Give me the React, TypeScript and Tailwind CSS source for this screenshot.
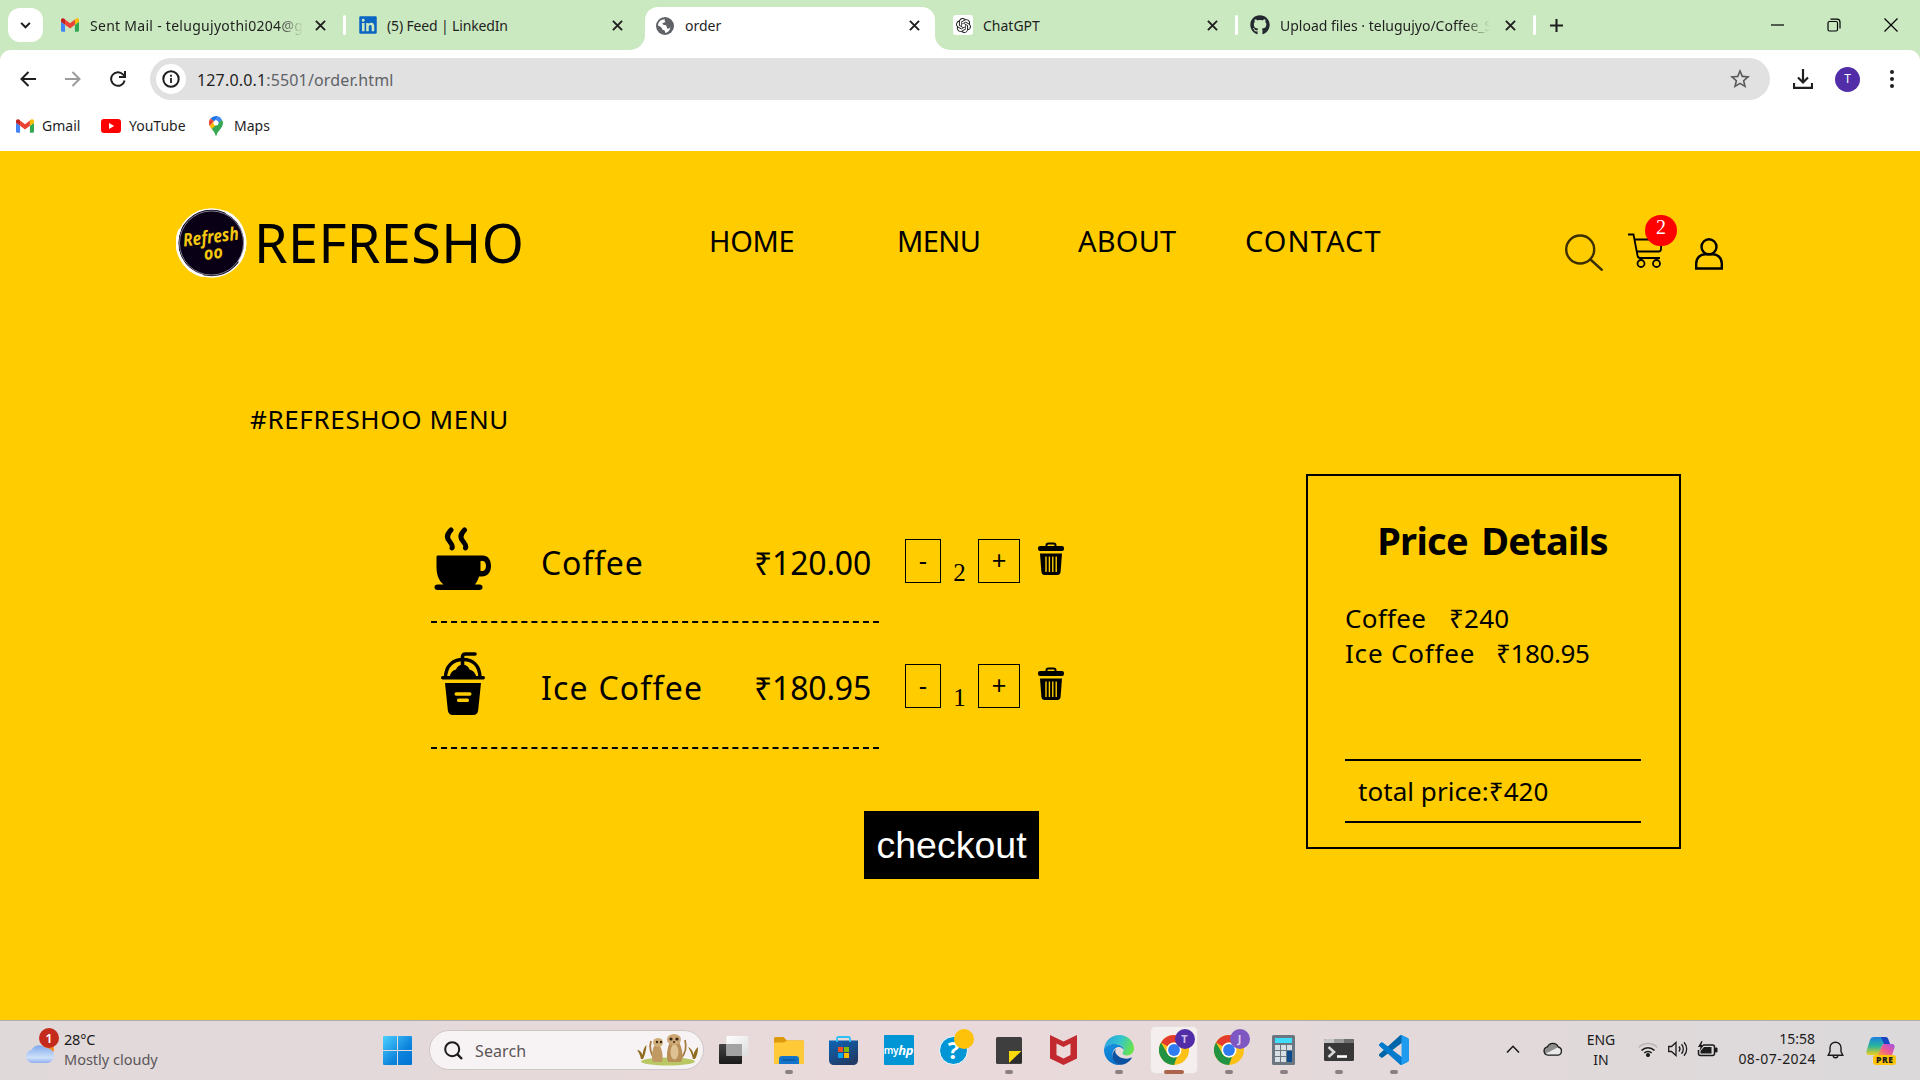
import React from "react";
import { FaGithub, FaLinkedin } from "react-icons/fa";
import { SiOpenai } from "react-icons/si";
import { MdStarOutline } from "react-icons/md";

/* ---------- small brand marks ---------- */

function Gmail() {
  return (
    <svg viewBox="52 42 88 66" className="h-[14px] w-[18px]">
      <path fill="#4285f4" d="M58 108h14V74L52 59v43c0 3.3 2.7 6 6 6" />
      <path fill="#34a853" d="M120 108h14c3.3 0 6-2.7 6-6V59l-20 15" />
      <path fill="#fbbc04" d="M120 48v26l20-15v-8c0-7.4-8.5-11.6-14.4-7.2" />
      <path fill="#ea4335" d="M72 74V48l24 18 24-18v26L96 92" />
      <path fill="#c5221f" d="M52 51v8l20 15V48l-5.6-4.2C60.500 39.400 52 43.600 52 51" />
    </svg>
  );
}

function MapsPin() {
  return (
    <svg viewBox="0 0 14 20" className="h-5 w-[14px]">
      <path d="M7 0a7 7 0 0 0-5.400 2.500L5 5.400 9 .3A7 7 0 0 0 7 0z" fill="#1a73e8" />
      <path d="M1.600 2.500A7 7 0 0 0 .7 10L5 5.300z" fill="#ea4335" />
      <path d="M9 .3 5 5.300a2.600 2.600 0 0 1 4 3.300l3.900-4.900A7 7 0 0 0 9 .3z" fill="#4285f4" />
      <path d="M.7 10c.4 1 1.200 2 2 3L9 8.600a2.600 2.600 0 0 1-4-3.300z" fill="#fbbc04" />
      <path d="M12.900 3.700 2.700 13C4.800 15.600 6 17 6.500 19.500c.1.600.9.600 1 0C8.300 15 14 12 14 7c0-1.200-.4-2.300-1.100-3.300z" fill="#34a853" />
      <circle cx="7" cy="7" r="2.500" fill="#fff" />
    </svg>
  );
}

function Globe() {
  return (
    <svg viewBox="0 0 18 18" className="size-[18px]">
      <circle cx="9" cy="9" r="9" fill="#5f6368" />
      <path d="M9.500 2.200c-1 .2-1.200 1.200-.6 1.900.8.900-.1 1.700-1.300 1.600-1-.1-1.400.8-.9 1.600.7 1 2.700.3 3.500 1.100 1 1 .1 2.300 1.300 3.200.9.600 2-.2 2.900-1.500A7 7 0 0 1 9.800 16c-.9-.5-.6-2-1.500-2.700-.9-.6-2.300-.4-2.400-1.800C5.800 10 4.500 9.600 2 8.400 2.100 5 5 2 9.500 2.200z" fill="#fff" />
    </svg>
  );
}

function CloseX({ className = "" }: { className?: string }) {
  return (
    <svg viewBox="0 0 12 12" className={"size-[11px] shrink-0 " + className} stroke="#1f1f1f" strokeWidth="2.100">
      <path d="M1 1l10 10M11 1 1 11" />
    </svg>
  );
}

function Separator({ className = "" }: { className?: string }) {
  return <div className={"h-5 w-[3px] shrink-0 rounded bg-white " + className} />;
}

/* ---------- browser chrome ---------- */

function TabStrip() {
  return (
    <div className="flex h-[50px] bg-[#cbe9c0] text-[14px] leading-[51px] text-[#1f1f1f]">
      <div className="ml-2 mt-2 flex h-[34px] w-[35px] items-center justify-center rounded-[12px] bg-white">
        <svg viewBox="0 0 12 8" className="h-[7px] w-[11px]" fill="none" stroke="#1f1f1f" strokeWidth="2.300">
          <path d="M1 1l5 5 5-5" />
        </svg>
      </div>

      <div className="ml-[18px] flex w-[282px] items-center">
        <Gmail />
        <span className="ml-[11px] w-[213px] overflow-hidden whitespace-nowrap tracking-[0.28px] [mask-image:linear-gradient(90deg,#000_88%,transparent)]">
          Sent Mail - telugujyothi0204@g
        </span>
        <CloseX className="ml-[12px]" />
      </div>
      <Separator className="mt-[15px]" />
      <div className="ml-[12px] flex w-[272px] items-center">
        <span className="flex size-5 items-center justify-center">
          <FaLinkedin className="size-[20px] text-[#0a66c2]" />
        </span>
        <span className="ml-[9px] w-[225px] whitespace-nowrap tracking-[-0.15px]">(5) Feed | LinkedIn</span>
        <CloseX />
      </div>

      <svg viewBox="0 0 15 15" className="mt-[35px] h-[15px] w-[15px] shrink-0">
        <path d="M0 15A15 15 0 0 0 15 0V15z" fill="#fff" />
      </svg>
      <div className="mt-[7px] flex h-[43px] w-[290px] items-center rounded-t-[13px] bg-white pb-[6px]">
        <span className="ml-[11px]">
          <Globe />
        </span>
        <span className="ml-[11px] w-[224px]">order</span>
        <CloseX />
      </div>
      <svg viewBox="0 0 15 15" className="mt-[35px] h-[15px] w-[15px] shrink-0">
        <path d="M15 15A15 15 0 0 1 0 0V15z" fill="#fff" />
      </svg>

      <div className="ml-[3px] flex w-[282px] items-center">
        <span className="flex size-5 items-center justify-center rounded-[3px] bg-white">
          <SiOpenai className="size-[15px]" />
        </span>
        <span className="ml-[10px] w-[224px]">ChatGPT</span>
        <CloseX />
      </div>
      <Separator className="mt-[15px]" />
      <div className="ml-[12px] flex w-[283px] items-center">
        <FaGithub className="size-5 text-[#24292f]" />
        <span className="ml-[10px] w-[210px] overflow-hidden whitespace-nowrap [mask-image:linear-gradient(90deg,#000_88%,transparent)]">
          Upload files · telugujyo/Coffee_S
        </span>
        <CloseX className="ml-[15px]" />
      </div>
      <Separator className="mt-[15px]" />
      <svg viewBox="0 0 13 13" className="ml-[14px] mt-[19px] size-[13px] shrink-0" stroke="#1f1f1f" strokeWidth="2.100">
        <path d="M6.500 0v13M0 6.500h13" />
      </svg>

      <div className="ml-auto mr-[22px] flex items-center">
        <svg viewBox="0 0 14 14" className="size-[14px]" stroke="#000" strokeWidth="1.200">
          <path d="M0 7h13" />
        </svg>
        <svg viewBox="0 0 14 14" className="ml-[42px] size-[14px]" fill="none" stroke="#000" strokeWidth="1.200">
          <rect x="1" y="3.500" width="9.500" height="9.500" rx="1.500" />
          <path d="M3.500 1.200h6.500a3 3 0 0 1 3 3v6.300" />
        </svg>
        <svg viewBox="0 0 14 14" className="ml-[43px] size-[14px]" stroke="#000" strokeWidth="1.200">
          <path d="M.5.5l13 13M13.500.5l-13 13" />
        </svg>
      </div>
    </div>
  );
}

function Toolbar() {
  return (
    <div className="bg-[#cbe9c0]">
      <div className="flex h-[58px] items-center rounded-t-[11px] bg-white">
        <svg viewBox="0 0 16 16" className="ml-5 size-4" fill="none" stroke="#1f1f1f" strokeWidth="2">
          <path d="M16 8H1.500M8.500 1l-7 7 7 7" />
        </svg>
        <svg viewBox="0 0 16 16" className="ml-[29px] size-4" fill="none" stroke="#9b9b9b" strokeWidth="2">
          <path d="M0 8h14.500M7.500 1l7 7-7 7" />
        </svg>
        <svg viewBox="0 0 16 16" className="ml-[29px] size-4" fill="none" stroke="#1f1f1f" strokeWidth="2">
          <path d="M14.600 9.500A6.800 6.800 0 1 1 13 3.400L15 5.400" />
          <path d="M15 0v6H9" />
        </svg>
        <div className="ml-[24px] flex h-[42px] w-[1620px] items-center rounded-full bg-[#e1e1e1]">
          <span className="ml-[6px] flex size-[30px] items-center justify-center rounded-full bg-white">
            <svg viewBox="0 0 18 18" className="size-[18px]" fill="none" stroke="#1f1f1f" strokeWidth="2">
              <circle cx="9" cy="9" r="7.700" />
              <path d="M9 8v5M9 4.800v2" strokeWidth="1.800" />
            </svg>
          </span>
          <span className="ml-[11px] pt-px text-[16px] tracking-[0.16px] text-[#5f6368]">
            <span className="text-[#1f1f1f]">127.0.0.1</span>:5501/order.html
          </span>
          <MdStarOutline className="ml-auto mr-[18px] size-[24px] text-[#5a5a5a]" />
        </div>
        <svg viewBox="0 0 20 20" className="ml-[23px] size-5" fill="none" stroke="#1f1f1f" strokeWidth="2.200">
          <path d="M10 0v13M5 8.500l5 5 5-5M1 14v4.800h18V14" />
        </svg>
        <span className="ml-[22px] flex size-[25px] items-center justify-center rounded-full bg-[#512da8] text-[12px] text-white">T</span>
        <svg viewBox="0 0 4 18" className="ml-[30px] h-[18px] w-1" fill="#1f1f1f">
          <circle cx="2" cy="2" r="2" />
          <circle cx="2" cy="9" r="2" />
          <circle cx="2" cy="16" r="2" />
        </svg>
      </div>
      <div className="flex h-[43px] items-center bg-white pb-[8px] text-[14px] text-[#1f1f1f]">
        <span className="ml-4 flex w-[85px] items-center gap-2">
          <Gmail />
          Gmail
        </span>
        <span className="flex w-[108px] items-center gap-2">
          <svg viewBox="0 0 20 14" className="h-[14px] w-5">
            <rect width="20" height="14" rx="3" fill="#f00" />
            <path d="M8 4l5.200 3L8 10z" fill="#fff" />
          </svg>
          YouTube
        </span>
        <span className="flex items-center gap-[11px]">
          <MapsPin />
          Maps
        </span>
      </div>
    </div>
  );
}

/* ---------- page ---------- */

function Logo() {
  return (
    <svg viewBox="0 0 71 72" className="-mt-px h-[72px] w-[71px]">
      <circle cx="35.500" cy="36" r="34" fill="#0a0016" stroke="#fff" strokeWidth="1.600" />
      <path d="M4 22A34 34 0 0 0 27 69M50 5a34 34 0 0 1 13 50" fill="none" stroke="#fff" strokeWidth="2.600" />
      <circle cx="35.500" cy="36" r="32" fill="none" stroke="#b9b4c4" strokeWidth=".7" />
      <g transform="rotate(-7 35 32)" fill="#f4c80f" fontFamily="'Noto Sans', sans-serif" fontWeight="700" fontStyle="italic">
        <text x="7" y="36" fontSize="18" textLength="56" lengthAdjust="spacingAndGlyphs">Refresh</text>
        <text x="26" y="52" fontSize="18" textLength="19" lengthAdjust="spacingAndGlyphs">oo</text>
      </g>
    </svg>
  );
}

function PageHeader() {
  return (
    <header className="mt-[56px] flex h-[72px] items-center pl-[176px] leading-[72px] text-black">
      <Logo />
      <span className="ml-[7px] w-[456px] pb-[3px] text-[54px] tracking-[0.4px]">REFRESHO</span>
      <nav className="flex h-[72px] text-[29px] leading-[68px]">
        <a className="-ml-px w-[188px] tracking-[-0.3px]">HOME</a>
        <a className="w-[181px] tracking-[-0.6px]">MENU</a>
        <a className="w-[167px] tracking-[0.2px]">ABOUT</a>
        <a className="w-[320px] tracking-[1.1px]">CONTACT</a>
      </nav>
      <svg viewBox="0 0 38 37" className="mt-[18px] h-[37px] w-[38px]" fill="none" stroke="#3c2f00" strokeWidth="2.400">
        <circle cx="15.200" cy="15.500" r="14" />
        <path d="M25.500 25.500 37.500 36.500" />
      </svg>
      <div className="relative ml-[25px] mt-[13px] h-[36px] w-[35px]">
        <svg viewBox="0 0 35 36" className="h-[36px] w-[35px]" fill="none" stroke="#000" strokeWidth="1.800">
          <path d="M0 2.500h5.500l4 21c.4 1.800 1 2.500 2.500 2.500h20M7 7.500h26.500L33 17c0 1.800-.8 2.500-2.500 2.500H9" />
          <circle cx="13" cy="31.500" r="3.500" />
          <circle cx="28.500" cy="31.500" r="3.500" />
        </svg>
        <span className="absolute -top-[17px] left-[17px] flex h-[31px] w-8 items-center justify-center rounded-full bg-[#f00] pb-[7px] font-['Liberation_Serif',serif] text-[20px] leading-none text-white">
          2
        </span>
      </div>
      <svg viewBox="0 0 28 32" className="ml-[32px] mt-[22px] h-8 w-7" fill="none" stroke="#000" strokeWidth="2.400">
        <circle cx="14" cy="8.800" r="7.500" />
        <path d="M1.200 30.500v-5c0-5.500 4-9.300 9-9.300h7.600c5 0 9 3.800 9 9.300v5z" />
      </svg>
    </header>
  );
}

function CoffeeIcon() {
  return (
    <svg viewBox="0 0 58 63" className="h-[63px] w-[58px]">
      <g fill="none" stroke="#000" strokeWidth="5" strokeLinecap="round">
        <path d="M17 3c-5 5-4 9-1 12 2 2.500 3 4 2 6" />
        <path d="M30.500 3c-5 5-4 9-1 12 2 2.500 3 4 2 6" />
      </g>
      <path d="M4 28.500h45c4.500 0 8 4 8 10.500s-4 10.500-9 10.500h-3c-1 3-2 5.500-4 8h4.500c2 0 3 1 3 2.700s-1 2.800-3 2.800H3.500C1.500 63 .5 62 .5 60.200s1-2.700 3-2.700h6C5 54 2.500 48 2.500 40V30c0-1 .5-1.500 1.500-1.500z" fill="#000" />
      <path d="M46.500 34h2c2.300 0 3.500 2 3.500 5s-1.500 5-4 5h-1.500z" fill="#ffcc00" />
    </svg>
  );
}

function IceCoffeeIcon() {
  return (
    <svg viewBox="0 0 44 63" className="ml-[7px] h-[63px] w-[44px]">
      <path d="M21.500 14V5c0-2 1-3 3-3H34" fill="none" stroke="#000" strokeWidth="3.600" strokeLinecap="round" />
      <path d="M4.500 25C5 13.500 12 7.500 22 7.500S38.500 13.500 39 25" fill="none" stroke="#000" strokeWidth="3.400" />
      <path d="M8.500 26c.5-5 3-7.500 6.500-8.500 1-3 3.500-4.500 6.800-5 3.300.5 5.800 2 6.700 5 3.500 1 6.500 3.500 7 8.500z" fill="#000" />
      <rect x="0" y="24" width="44" height="3.600" rx="1.800" fill="#000" />
      <path d="M4 31h36l-2.800 27c-.4 3.500-2 5-5 5H11.800c-3 0-4.600-1.500-5-5z" fill="#000" />
      <rect x="13.500" y="40.300" width="17" height="3.400" rx="1.600" fill="#ffcc00" />
      <rect x="16" y="46.600" width="12" height="3.400" rx="1.600" fill="#ffcc00" />
    </svg>
  );
}

function Trash() {
  return (
    <svg viewBox="0 0 26 33" className="h-[33px] w-[26px]">
      <path d="M8.500 5V3.200c0-1 .7-1.700 1.700-1.700h5.600c1 0 1.700.7 1.700 1.700V5" fill="none" stroke="#000" strokeWidth="2" />
      <rect y="4" width="26" height="5" rx="2" fill="#000" />
      <path d="M2 11.500h22l-1.400 18.300c-.2 2-1 3.200-3 3.200H6.400c-2 0-2.800-1.200-3-3.200z" fill="#000" />
      <path d="M8 14.500v15.500M11.400 14.500v15.500M14.800 14.500v15.500M18.200 14.500v15.500" stroke="#ffcc00" strokeWidth="1.400" />
    </svg>
  );
}

function OrderRow({ icon, name, nameClass, price, qty, className }: {
  icon: React.ReactNode; name: string; nameClass: string; price: string; qty: number; className: string;
}) {
  return (
    <div className="flex">
      <div className={"flex w-[448px] border-b-2 border-dashed border-black " + className}>
        <div className="ml-[3px] h-[63px] w-[107px]">{icon}</div>
        <span className={"w-[213px] whitespace-nowrap text-[32px] leading-[72px] " + nameClass}>{name}</span>
        <span className="text-[32px] leading-[72px] tracking-[-0.2px]">{price}</span>
      </div>
      <button className="ml-[26px] mt-[12px] flex h-[44px] w-[36px] items-center justify-center border border-black font-['Liberation_Sans',sans-serif] text-[25px] leading-none">
        -
      </button>
      <span className="mt-[30px] w-[37px] text-center font-['Liberation_Serif',serif] text-[25px] leading-[32px]">{qty}</span>
      <button className="mt-[12px] flex h-[44px] w-[42px] items-center justify-center border border-black pb-[2px] font-['Liberation_Sans',sans-serif] text-[25px] leading-none">
        +
      </button>
      <div className="ml-[18px] mt-[15px]">
        <Trash />
      </div>
    </div>
  );
}

function PriceDetails() {
  return (
    <aside className="flex h-[375px] w-[375px] flex-col border-2 border-black pl-[37px]">
      <h2 className="mt-[39px] -ml-[39px] text-center text-[38px] font-bold leading-[50px] tracking-[-0.7px] [word-spacing:4px]">Price Details</h2>
      <div className="mt-[36px] flex text-[26px] leading-[35px]">
        <span className="w-[104px] tracking-[0.3px]">Coffee</span>
        <span className="tracking-[0.2px]">₹240</span>
      </div>
      <div className="flex text-[26px] leading-[35px]">
        <span className="w-[151px] tracking-[0.8px]">Ice Coffee</span>
        <span className="tracking-[-0.4px]">₹180.95</span>
      </div>
      <div className="mt-[88px] w-[296px] border-y-2 border-black pl-[13px] text-[26px] leading-[60px] tracking-[0.05px]">total price:₹420</div>
    </aside>
  );
}

function OrderPage() {
  return (
    <main className="h-[869px] overflow-hidden bg-[#ffcc00] text-black">
      <PageHeader />
      <h1 className="ml-[250px] mt-[125px] h-[30px] text-[26px] leading-[30px] tracking-[0.65px]">#REFRESHOO MENU</h1>
      <div className="mt-[40px] flex items-start pl-[431px]">
        <div className="w-[875px] pt-[53px]">
          <OrderRow icon={<CoffeeIcon />} name="Coffee" nameClass="tracking-[0.8px]" price="₹120.00" qty={2} className="h-[96px]" />
          <div className="h-[29px]" />
          <OrderRow icon={<IceCoffeeIcon />} name="Ice Coffee" nameClass="tracking-[1.2px]" price="₹180.95" qty={1} className="h-[97px]" />
          <button className="ml-[433px] mt-[62px] block h-[68px] w-[175px] bg-black font-['Liberation_Sans',sans-serif] text-[37.5px] leading-[68px] text-white">
            checkout
          </button>
        </div>
        <PriceDetails />
      </div>
    </main>
  );
}

/* ---------- taskbar ---------- */

function ChromeMark() {
  return (
    <svg viewBox="0 0 30 30" className="size-[30px]">
      <circle cx="15" cy="15" r="15" fill="#fbc116" />
      <path d="M15 0A15 15 0 0 1 28 7.500H15A7.500 7.500 0 0 0 8.500 11.300L2 7.500A15 15 0 0 1 15 0z" fill="#e33b2e" />
      <path d="M2 7.500 8.500 18.700A7.500 7.500 0 0 0 18 21.800L15 30A15 15 0 0 1 2 7.500z" fill="#229342" />
      <circle cx="15" cy="15" r="7.500" fill="#fff" />
      <circle cx="15" cy="15" r="5.900" fill="#2f7bf0" />
    </svg>
  );
}

function TaskView() {
  return (
    <svg viewBox="0 0 30 28" className="h-7 w-[30px]">
      <defs>
        <linearGradient id="tvd" x1="0" y1="0" x2="0" y2="1"><stop stopColor="#444" /><stop offset="1" stopColor="#1a1a1a" /></linearGradient>
        <linearGradient id="tvl" x1="0" y1="0" x2="1" y2="1"><stop stopColor="#fff" /><stop offset="1" stopColor="#ddd" /></linearGradient>
      </defs>
      <rect y="8" width="23" height="20" rx="1" fill="url(#tvd)" />
      <rect x="7.500" width="22" height="20" rx="1" fill="url(#tvl)" />
      <rect x="7.500" y="8" width="15.500" height="12" fill="#a3a3a3" />
    </svg>
  );
}

function Folder() {
  return (
    <svg viewBox="0 0 30 27" className="h-[27px] w-[30px]">
      <path d="M0 1.500C0 .7.700 0 1.500 0h8l3.500 3.500h15.500c.8 0 1.500.7 1.500 1.500v6H0z" fill="#dd9a0b" />
      <path d="M0 5.500h10l3-2h17V27H0z" fill="#ffc937" />
      <path d="M5 27v-5c0-2 1-3 3-3h14c2 0 3 1 3 3v5z" fill="#1474c9" />
      <path d="M8.500 23h13" stroke="#0b4f96" strokeWidth="1.200" />
    </svg>
  );
}

function Store() {
  return (
    <svg viewBox="0 0 29 29" className="size-[29px]">
      <defs>
        <linearGradient id="st" x1="0" y1="0" x2=".6" y2="1"><stop stopColor="#0c66b8" /><stop offset="1" stopColor="#223a66" /></linearGradient>
      </defs>
      <path d="M0 4.500h29V24c0 3-2 5-5 5H5c-3 0-5-2-5-5z" fill="url(#st)" />
      <path d="M8 6V2.500C8 1.600 8.600 1 9.500 1h10c.9 0 1.500.6 1.500 1.500V6" fill="none" stroke="#2fc0f5" strokeWidth="1.800" />
      <path d="M9 11h5v5H9z" fill="#f25022" />
      <path d="M15 11h5v5h-5z" fill="#7fba00" />
      <path d="M9 17h5v5H9z" fill="#00a4ef" />
      <path d="M15 17h5v5h-5z" fill="#ffb900" />
    </svg>
  );
}

function StickyNotes() {
  return (
    <svg viewBox="0 0 26 27" className="h-[27px] w-[26px]">
      <rect width="26" height="27" rx="1.500" fill="#3e3e3e" />
      <path d="M13 26V14h12.500L13 26z" fill="#fbd90a" />
      <path d="M13.500 26 26 14v11a1 1 0 0 1-1 1z" fill="#2c2c2c" />
    </svg>
  );
}

function McAfee() {
  return (
    <svg viewBox="0 0 27 30" className="h-[30px] w-[27px]">
      <path d="M0 0l13.500 6.500L27 0v23.500L13.500 30 0 23.500z" fill="#c32a30" />
      <path d="M6.500 8.500l7 3.500 7-3.500v11.500l-7 3.500-7-3.500z" fill="#ecdada" />
    </svg>
  );
}

function Edge() {
  return (
    <svg viewBox="0 0 30 30" className="size-[30px]">
      <defs>
        <linearGradient id="e1" x1="0" y1=".2" x2="1" y2=".5"><stop stopColor="#2a9fe0" /><stop offset=".5" stopColor="#33c4cf" /><stop offset="1" stopColor="#69e34b" /></linearGradient>
        <linearGradient id="e2" x1="0" y1="0" x2=".5" y2="1"><stop stopColor="#1594e2" /><stop offset="1" stopColor="#0b6fc8" /></linearGradient>
      </defs>
      <path d="M0 14C1 5.500 7.500 0 15.500 0 24 0 30 6.500 30 13.500c0 4-3 7-7 7-3 0-5-1-4.500-2.500.8-1 1.200-2 1.200-3 0-3.500-4.200-6-9.200-6C6 9 2 10.500 0 14z" fill="url(#e1)" />
      <path d="M0 14C2 10.500 6 9 10 9c5 0 9.700 2.500 9.700 6-1-2-3-3.500-5.700-3-4 1-6 5-5.500 9 .6 4.500 4 8.200 8.500 8.900-1 .1-1.500.1-2 .1C6.500 30 0 23 0 15z" fill="url(#e2)" />
      <path d="M12 14c-3 2.500-4.500 6-3 10 1.500 3.800 5 6 9 5.700 4-.6 7.500-3 9.500-6.200.4-.7-.1-1.100-.8-.8-5 2.300-11.700.3-14.700-4-.9-1.500-1-3.200 0-4.700z" fill="#0d52a0" />
    </svg>
  );
}

function Calculator() {
  return (
    <svg viewBox="0 0 23 30" className="h-[30px] w-[23px]">
      <rect width="23" height="30" rx="1.500" fill="#6b7680" />
      <rect x="3" y="3" width="17" height="5" fill="#40dcfb" />
      <g fill="#d7dee4">
        <rect x="3" y="10" width="5" height="5" /><rect x="9" y="10" width="5" height="5" /><rect x="15" y="10" width="5" height="5" />
        <rect x="3" y="16" width="5" height="5" /><rect x="9" y="16" width="5" height="5" />
        <rect x="3" y="22" width="5" height="5" /><rect x="9" y="22" width="5" height="5" />
      </g>
      <rect x="15" y="16" width="5" height="11" fill="#0e4b8c" />
    </svg>
  );
}

function Terminal() {
  return (
    <svg viewBox="0 0 30 22" className="h-[22px] w-[30px]">
      <rect width="30" height="22" rx="1.500" fill="#383838" />
      <path d="M1.500 0H10v4H0V1.500C0 .7.700 0 1.500 0z" fill="#c5c5c5" />
      <path d="M10 0h10v4H10z" fill="#999" />
      <path d="M20 0h8.500c.8 0 1.500.7 1.500 1.500V4H20z" fill="#6e6e6e" />
      <path d="M4.500 8l5.500 5-5.500 5" fill="none" stroke="#d6d6d6" strokeWidth="2.600" />
      <path d="M13 17.500h10" stroke="#fff" strokeWidth="2.600" />
    </svg>
  );
}

function VSCode() {
  return (
    <svg viewBox="0 0 100 100" className="size-[30px]">
      <path d="M96.500 10.800 75.900.9a6.200 6.200 0 0 0-7.100 1.200L1.300 63.600a4.200 4.200 0 0 0 0 6.200l5.500 5a4.200 4.200 0 0 0 5.300.2l81.200-61.600c2.700-2.100 6.600-.1 6.600 3.300v-.2c0-2.400-1.300-4.600-3.400-5.700z" fill="#0065a9" />
      <path d="M96.500 89.200 75.900 99.100a6.200 6.200 0 0 1-7.100-1.200L1.300 36.400a4.200 4.200 0 0 1 0-6.200l5.500-5a4.200 4.200 0 0 1 5.300-.2l81.200 61.600c2.700 2.100 6.600.1 6.600-3.300v.2c0 2.400-1.300 4.600-3.400 5.700z" fill="#007acc" />
      <path d="M75.900 99.100a6.200 6.200 0 0 1-7.100-1.200c2.300 2.300 6.300.7 6.300-2.600V4.700c0-3.300-4-4.900-6.300-2.600A6.200 6.200 0 0 1 75.900.9l20.600 9.900A6.200 6.200 0 0 1 100 16.400v67.200c0 2.400-1.400 4.600-3.500 5.600z" fill="#1f9cf0" />
    </svg>
  );
}

function Meerkats() {
  return (
    <svg viewBox="0 0 61 32" className="h-8 w-[61px]">
      <ellipse cx="31" cy="27.500" rx="27" ry="4" fill="#b9c765" />
      <path d="M4 25C3 20 1 17 0 16c3 0 5 3 5.500 5C6 17 7 13 9.500 11 9 17 8 21 6 25zM56 25c-1-5-3-9-5-12 4 2 5 5 5.500 8 .5-3 2-6 4.500-8 0 5-1 9-3 12z" fill="#8f6a1c" />
      <path d="M14 7c-2 7 0 12 3 18M48 6c2 8 1 13-4 18" stroke="#a57b43" strokeWidth="1.800" fill="none" />
      <path d="M17 12c-2 4-2.500 12-1 16h9c1.500-6 0-12-2-16z" fill="#c19a63" />
      <ellipse cx="21" cy="8.500" rx="5" ry="4.500" fill="#d0ae7a" />
      <path d="M33 8c-3 6-4 15-2 20h13c3-6 1-14-2-20z" fill="#b98f58" />
      <ellipse cx="37.500" cy="18" rx="4" ry="7.500" fill="#dfc294" />
      <ellipse cx="37" cy="5.500" rx="7" ry="5.500" fill="#cda874" />
      <g fill="#3a2815">
        <circle cx="34" cy="5" r="1.600" /><circle cx="40" cy="5" r="1.600" /><circle cx="37" cy="8" r="1" />
        <circle cx="20" cy="8" r="1.200" /><circle cx="24" cy="8" r="1.200" />
      </g>
    </svg>
  );
}

function Slot({ children, mark, active }: { children: React.ReactNode; mark?: boolean; active?: boolean }) {
  return (
    <div className="flex h-[59px] w-[55px] flex-col items-center">
      <div className={active ? "mt-[5px] flex h-12 w-12 items-center justify-center rounded-[5px] border border-[#e6dede] bg-[#f5eeee]" : "mt-[5px] flex h-12 w-12 items-center justify-center"}>
        {children}
      </div>
      {active && <div className="-mt-1 h-1 w-5 rounded-full bg-[#ac644c]" />}
      {mark && <div className="-mt-1 h-1 w-2 rounded-full bg-[#8a8083]" />}
    </div>
  );
}

function AppIcons() {
  return (
    <div className="ml-[2px] flex">
      <Slot><TaskView /></Slot>
      <Slot mark><Folder /></Slot>
      <Slot><Store /></Slot>
      <Slot>
        <span className="flex size-[30px] items-center justify-center rounded-[1px] bg-[#0096d6] text-[10px] font-semibold leading-none tracking-[-0.3px] text-white">
          my<i className="text-[13px] font-bold">hp</i>
        </span>
      </Slot>
      <Slot>
        <span className="relative flex size-[29px] items-center justify-center rounded-full border-[1.5px] border-white bg-[#0096d6] text-[24px] font-bold leading-none text-white">
          ?
          <span className="absolute -right-[7px] -top-[8px] size-5 rounded-full bg-[#ffc20a]" />
        </span>
      </Slot>
      <Slot mark><StickyNotes /></Slot>
      <Slot><McAfee /></Slot>
      <Slot mark><Edge /></Slot>
      <Slot active>
        <span className="relative">
          <ChromeMark />
          <span className="absolute -right-[6px] -top-[6px] flex size-5 items-center justify-center rounded-full bg-[#512da8] text-[11px] font-bold text-[#c9bce6]">T</span>
        </span>
      </Slot>
      <Slot mark>
        <span className="relative">
          <ChromeMark />
          <span className="absolute -right-[6px] -top-[6px] flex size-5 items-center justify-center rounded-full bg-[#7e57c2] font-['Open_Sans',sans-serif] text-[11px] font-bold text-[#d9cdef]">J</span>
        </span>
      </Slot>
      <Slot mark><Calculator /></Slot>
      <Slot mark><Terminal /></Slot>
      <Slot mark><VSCode /></Slot>
    </div>
  );
}

function Tray() {
  return (
    <div className="flex h-[59px] flex-1 text-[14px] leading-5 text-[#1b1b1b]">
      <svg viewBox="0 0 14 8" className="ml-[85px] mt-[24px] h-2 w-[14px] shrink-0" fill="none" stroke="#1b1b1b" strokeWidth="1.600">
        <path d="M1 7.500l6-6.200 6 6.200" />
      </svg>
      <svg viewBox="0 0 20 14" className="ml-[23px] mt-[21px] h-[14px] w-5 shrink-0">
        <path d="M5 13.200a4.200 4.200 0 0 1-.6-8.300A6 6 0 0 1 15.300 5a4.200 4.200 0 0 1-.3 8.200z" fill="#e9e9e9" />
        <path d="M4.400 4.900A6 6 0 0 1 15.300 5L6 10 2 12A4.200 4.200 0 0 1 4.400 4.900z" fill="#8d8d8d" />
        <path d="M5 13.200a4.200 4.200 0 0 1-.6-8.300A6 6 0 0 1 15.300 5a4.200 4.200 0 0 1-.3 8.200z" fill="none" stroke="#1b1b1b" strokeWidth="1.300" />
      </svg>
      <div className="ml-[18px] mt-[9px] w-10 text-center">
        <div>ENG</div>
        <div>IN</div>
      </div>
      <svg viewBox="0 0 20 15" className="ml-[17px] mt-[21px] h-[15px] w-5 shrink-0" fill="none" stroke="#1b1b1b" strokeWidth="1.500">
        <path d="M.7 5.500a13 13 0 0 1 18.600 0" stroke="#b9b5b6" />
        <path d="M3.500 8.500a9 9 0 0 1 13 0M6.300 11a5.200 5.200 0 0 1 7.400 0" />
        <circle cx="10" cy="13" r="1.300" fill="#1b1b1b" />
      </svg>
      <svg viewBox="0 0 20 16" className="ml-[10px] mt-[20px] h-4 w-5 shrink-0" fill="none" stroke="#1b1b1b" strokeWidth="1.300">
        <path d="M.7 5.500h2.800L8 1.500v13l-4.500-4H.7zM11 5.500a4 4 0 0 1 0 5M13.500 3.300a7 7 0 0 1 0 9.400M16 1.200a10 10 0 0 1 0 13.600" />
      </svg>
      <svg viewBox="0 0 21 16" className="ml-[9px] mt-[20px] h-4 w-[21px] shrink-0">
        <path d="M6 4h9.500a2 2 0 0 1 2 2v6.500a2 2 0 0 1-2 2h-12a2 2 0 0 1-2-2V9" fill="none" stroke="#1b1b1b" strokeWidth="1.500" />
        <path d="M7 6h7.500v6.500H3.500V10z" fill="#1b1b1b" />
        <path d="M18.500 7h1.500v4h-1.500z" fill="#1b1b1b" stroke="#1b1b1b" />
        <path d="M4.500 0 1 6h2.500L2.500 10 7 4H4.300L5.500 0z" fill="#1b1b1b" />
      </svg>
      <div className="ml-[15px] mt-[8px] w-[83px] text-right">
        <div className="pr-px">15:58</div>
        <div className="tracking-[0.45px]">08-07-2024</div>
      </div>
      <svg viewBox="0 0 17 18" className="ml-[11px] mt-[20px] h-[18px] w-[17px] shrink-0" fill="none" stroke="#1b1b1b" strokeWidth="1.400">
        <path d="M1.200 14.300 3 10.500V6.700a5.500 5.500 0 0 1 11 0v3.800l1.800 3.800zM6.200 14.500a2.300 2.300 0 0 0 4.600 0" />
      </svg>
      <svg viewBox="0 0 30 30" className="ml-[22px] mt-[15px] size-[30px] shrink-0">
        <defs>
          <linearGradient id="cp1" x1="0" y1="0" x2="0" y2="1"><stop stopColor="#1b7fe0" /><stop offset=".5" stopColor="#29b59c" /><stop offset="1" stopColor="#f3cf1b" /></linearGradient>
          <linearGradient id="cp2" x1="1" y1="0" x2="0" y2="1"><stop stopColor="#a24ee8" /><stop offset=".55" stopColor="#ee5c93" /><stop offset="1" stopColor="#f99a3c" /></linearGradient>
        </defs>
        <path d="M8 1h11c2 0 3 1 3.500 3L24 8h-5c-2 0-3 1-3.500 3L13 19H3c-2 0-3-1.500-2.500-4L4 4c.6-2 2-3 4-3z" fill="url(#cp1)" />
        <path d="M15 1h4c2 0 3 1 3.500 3L24 8h-6z" fill="#1a44c2" />
        <path d="M18.500 8H26c2 0 3 1.500 2.500 3.500L26 19H12l3.500-8c.6-2 1.500-3 3-3z" fill="url(#cp2)" />
        <rect x="7" y="19" width="23" height="10" rx="3" fill="#fdc50c" />
        <text x="10" y="27" fontSize="8.500" fontWeight="800" fontFamily="'Open Sans', sans-serif" textLength="17" fill="#1b1b1b">PRE</text>
      </svg>
    </div>
  );
}

function Taskbar() {
  return (
    <div className="flex h-[60px] overflow-hidden border-t border-[#b3abad] bg-linear-to-r from-[#e0d9da] via-[#ead9da] to-[#dbd9da]">
      <div className="flex w-[383px] pl-[25px]">
        <div className="relative mt-[12px] h-[31px] w-[34px]">
          <svg viewBox="0 0 31 31" className="size-[31px]">
            <defs>
              <linearGradient id="wc" x1="0" y1="0" x2="0" y2="1"><stop stopColor="#7fa9ee" /><stop offset=".7" stopColor="#cfe0fa" /><stop offset="1" stopColor="#8fb0ee" /></linearGradient>
            </defs>
            <circle cx="23" cy="16" r="6" fill="#f58a1c" />
            <path d="M7 30a6.500 6.500 0 0 1-.6-12.900A9 9 0 0 1 21 15a7.600 7.600 0 0 1 2 15z" fill="url(#wc)" />
          </svg>
          <span className="absolute -top-[5px] left-[14px] flex size-5 items-center justify-center rounded-full bg-[#c42b1c] text-[13px] font-semibold leading-none text-white">1</span>
        </div>
        <div className="ml-[5px] mt-[8px] text-[14.5px] leading-5">
          <div className="tracking-[-0.2px] text-[#1b1b1b]">28°C</div>
          <div className="text-[#5b5557]">Mostly cloudy</div>
        </div>
      </div>
      <svg viewBox="0 0 29 29" className="mt-[15px] size-[29px] shrink-0">
        <defs>
          <linearGradient id="wn" x1="0" y1="0" x2="1" y2="1"><stop stopColor="#4cd0ff" /><stop offset=".6" stopColor="#0d84dd" /><stop offset="1" stopColor="#0074d4" /></linearGradient>
        </defs>
        <path d="M0 1a1 1 0 0 1 1-1h13v14H0zM15 0h13a1 1 0 0 1 1 1v13H15zM0 15h14v14H1a1 1 0 0 1-1-1zM15 15h14v13a1 1 0 0 1-1 1H15z" fill="url(#wn)" />
      </svg>
      <div className="ml-[17px] mt-[9px] flex h-[40px] w-[275px] items-center rounded-full border border-[#cfc6c8] bg-[#f7f3f4]">
        <svg viewBox="0 0 19 19" className="ml-[14px] size-[19px]" fill="none" stroke="#1b1b1b" strokeWidth="2">
          <circle cx="8.200" cy="8.200" r="7" />
          <path d="M13.200 13.200 18 18" strokeWidth="2.400" />
        </svg>
        <span className="ml-[12px] pt-px text-[16px] tracking-[0.1px] text-[#5b5557]">Search</span>
        <span className="ml-auto mr-[5px]"><Meerkats /></span>
      </div>
      <AppIcons />
      <Tray />
    </div>
  );
}

export default function App() {
  return (
    <div className="h-[1080px] w-[1920px] overflow-hidden bg-white font-['Noto_Sans','Open_Sans',sans-serif]">
      <TabStrip />
      <Toolbar />
      <OrderPage />
      <Taskbar />
    </div>
  );
}
